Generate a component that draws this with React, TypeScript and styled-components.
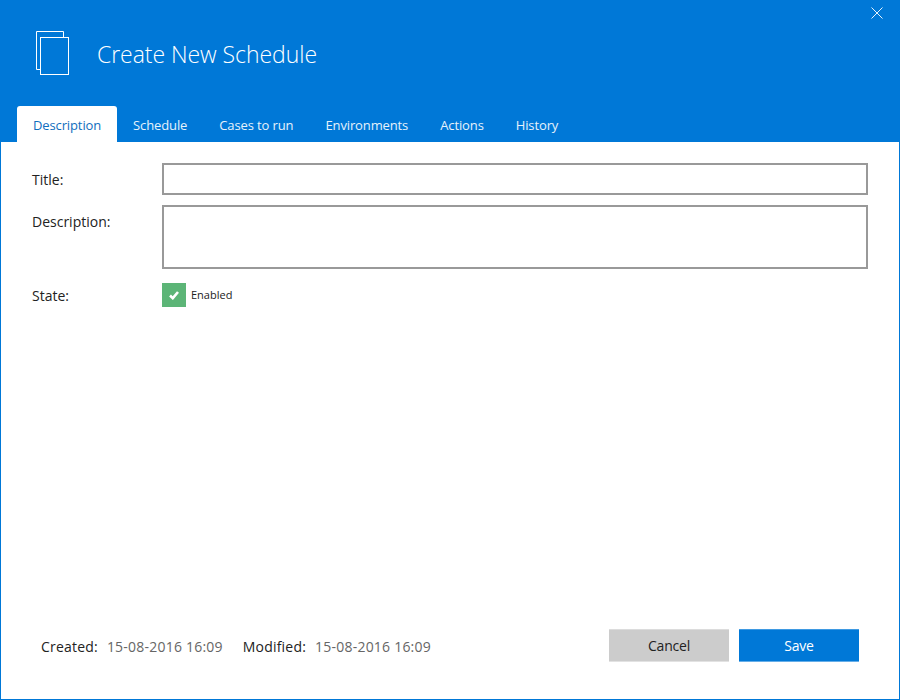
import React from 'react';
import styled, { createGlobalStyle } from 'styled-components';

const GlobalStyle = createGlobalStyle`
  html, body {
    margin: 0;
    padding: 0;
    background: #fff;
  }
  * {
    box-sizing: border-box;
  }
`;

const Window = styled.div`
  width: 900px;
  height: 700px;
  display: flex;
  flex-direction: column;
  border: 1px solid #0078d7;
  border-top: 0;
  background: #fff;
  font-family: 'Open Sans', 'Liberation Sans', sans-serif;
  color: #222;
  position: relative;
`;

const Header = styled.div`
  height: 142px;
  margin: 0 -1px;
  flex: none;
  background: #0078d7;
  display: flex;
  flex-direction: column;
`;

const TitleRow = styled.div`
  height: 106px;
  padding: 31px 0 0 36px;
  display: flex;
  align-items: flex-start;
  gap: 27px;
`;

const HeaderTitle = styled.h1`
  margin: 7px 0 0;
  font-size: 23px;
  line-height: 32px;
  font-weight: 300;
  color: #fff;
  letter-spacing: -0.05px;
`;

const CloseButton = styled.button`
  position: absolute;
  top: 7px;
  right: 16px;
  width: 12px;
  height: 12px;
  padding: 0;
  border: 0;
  background: none;
  display: flex;
`;

const Tabs = styled.div`
  height: 36px;
  padding-left: 17px;
  display: flex;
`;

const Tab = styled.div<{ $active?: boolean }>`
  padding: 1px 16px 0;
  display: flex;
  align-items: center;
  font-size: 13px;
  letter-spacing: -0.12px;
  border-radius: 3px 3px 0 0;
  background: ${p => (p.$active ? '#fff' : 'transparent')};
  color: ${p => (p.$active ? '#106ebe' : '#e6f2fb')};
`;

const Body = styled.div`
  flex: 1;
  display: flex;
  flex-direction: column;
  padding: 21px 31px 0;
`;

const Form = styled.div`
  flex: 1;
  display: flex;
  flex-direction: column;
  gap: 10px;
`;

const Row = styled.div`
  display: grid;
  grid-template-columns: 130px 706px;
  align-items: start;
`;

const Label = styled.label`
  height: 32px;
  padding-top: 1px;
  font-size: 14px;
  line-height: 32px;
`;

const TextBox = styled.input`
  display: block;
  width: 100%;
  height: 32px;
  border: 2px solid #999;
  background: #fff;
  outline: none;
`;

const TextArea = styled.textarea`
  display: block;
  width: 100%;
  height: 64px;
  border: 2px solid #999;
  background: #fff;
  outline: none;
  resize: none;
`;

const StateRow = styled(Row)`
  align-items: center;
`;

const CheckWrap = styled.div`
  display: flex;
  align-items: center;
  gap: 5px;
`;

const CheckBox = styled.div`
  width: 24px;
  height: 24px;
  background: #5cb577;
  display: flex;
  align-items: center;
  justify-content: center;
`;

const CheckLabel = styled.span`
  margin-bottom: 1px;
  font-size: 11px;
`;

const Footer = styled.div`
  height: 70px;
  flex: none;
  padding: 0 9px 0 9px;
  display: flex;
  justify-content: space-between;
  align-items: flex-start;
`;

const Stamps = styled.div`
  display: flex;
  align-items: center;
  height: 34px;
  font-size: 14px;
`;

const StampLabel = styled.span`
  color: #222;
  margin-right: 9px;
  letter-spacing: 0.2px;
`;

const StampValue = styled.span`
  color: #666;
  margin-right: 20px;
  letter-spacing: 0.22px;
`;

const Buttons = styled.div`
  display: flex;
  gap: 10px;
`;

const Button = styled.button<{ $primary?: boolean }>`
  width: 120px;
  height: 33px;
  padding: 0;
  border: 0;
  border-top: 1px solid ${p => (p.$primary ? '#3f9ae2' : '#dcdcdc')};
  border-bottom: 1px solid ${p => (p.$primary ? '#66aee8' : '#e2e2e2')};
  background: ${p => (p.$primary ? '#0078d7' : '#ccc')};
  color: ${p => (p.$primary ? '#fff' : '#222')};
  font-family: inherit;
  font-size: 14px;
  letter-spacing: -0.2px;
`;

const tabs = ['Description', 'Schedule', 'Cases to run', 'Environments', 'Actions', 'History'];

const App: React.FC = () => (
  <>
    <GlobalStyle />
    <Window>
      <Header>
        <TitleRow>
          <svg width="34" height="45" viewBox="0 0 34 45" fill="none" stroke="#fff" style={{ flex: 'none' }}>
            <path d="M4.5 38.5H0.5V0.5H27.5V6" />
            <rect x="4.5" y="6.5" width="28" height="37" />
          </svg>
          <HeaderTitle>Create New Schedule</HeaderTitle>
        </TitleRow>
        <Tabs>
          {tabs.map((t, i) => (
            <Tab key={t} $active={i === 0}>{t}</Tab>
          ))}
        </Tabs>
      </Header>
      <CloseButton aria-label="Close">
        <svg width="12" height="12" viewBox="0 0 12 12" stroke="#e6f2fb" fill="none">
          <path d="M0.5 0.5L11.5 11.5M11.5 0.5L0.5 11.5" />
        </svg>
      </CloseButton>
      <Body>
        <Form>
          <Row>
            <Label>Title:</Label>
            <TextBox />
          </Row>
          <Row>
            <Label>Description:</Label>
            <TextArea />
          </Row>
          <StateRow>
            <Label>State:</Label>
            <CheckWrap>
              <CheckBox>
                <svg width="10" height="9" viewBox="0 0 10 9" fill="none" stroke="#fff" strokeWidth="2.6">
                  <path d="M1 4.5L3.8 7.2L9 1" />
                </svg>
              </CheckBox>
              <CheckLabel>Enabled</CheckLabel>
            </CheckWrap>
          </StateRow>
        </Form>
        <Footer>
          <Stamps>
            <StampLabel>Created:</StampLabel>
            <StampValue>15-08-2016 16:09</StampValue>
            <StampLabel>Modified:</StampLabel>
            <StampValue>15-08-2016 16:09</StampValue>
          </Stamps>
          <Buttons>
            <Button>Cancel</Button>
            <Button $primary>Save</Button>
          </Buttons>
        </Footer>
      </Body>
    </Window>
  </>
);

export default App;
